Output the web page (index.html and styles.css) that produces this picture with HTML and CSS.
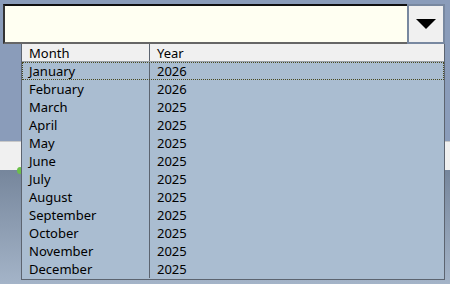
FILE: index.html
```html
<!DOCTYPE html>
<html lang="en">
<head>
    <meta charset="UTF-8">
    <title>Month picker</title>
    <link rel="stylesheet" href="styles.css">
</head>
<body>
    <div class="page">
        <div class="band-top">
            <div class="combo">
                <div class="combo-text"></div>
                <div class="combo-btn">
                    <svg width="20" height="11" viewBox="0 0 20 11"><polygon points="0,0 20,0 10,10" fill="#000"/></svg>
                </div>
            </div>
        </div>
        <div class="strip"><span class="blob"></span></div>
        <div class="band-bottom"></div>

        <div class="dropdown">
            <div class="row head">
                <div class="cell">Month</div>
                <div class="cell">Year</div>
            </div>
            <div class="row focus"><div class="cell">January</div><div class="cell">2026</div></div>
            <div class="row"><div class="cell">February</div><div class="cell">2026</div></div>
            <div class="row"><div class="cell">March</div><div class="cell">2025</div></div>
            <div class="row"><div class="cell">April</div><div class="cell">2025</div></div>
            <div class="row"><div class="cell">May</div><div class="cell">2025</div></div>
            <div class="row"><div class="cell">June</div><div class="cell">2025</div></div>
            <div class="row"><div class="cell">July</div><div class="cell">2025</div></div>
            <div class="row"><div class="cell">August</div><div class="cell">2025</div></div>
            <div class="row"><div class="cell">September</div><div class="cell">2025</div></div>
            <div class="row"><div class="cell">October</div><div class="cell">2025</div></div>
            <div class="row"><div class="cell">November</div><div class="cell">2025</div></div>
            <div class="row"><div class="cell">December</div><div class="cell">2025</div></div>
        </div>
    </div>
</body>
</html>
```

FILE: styles.css
```css
html, body {
    margin: 0;
    padding: 0;
}

body {
    font-family: "Comic Sans MS", "Noto Sans", sans-serif;
    font-size: 13px;
    color: #000;
    width: 450px;
    height: 284px;
    overflow: hidden;
}

.page {
    position: relative;
    height: 284px;
    display: flex;
    flex-direction: column;
}

.band-top {
    height: 141px;
    background: #8a9cba;
    padding: 4px 0 0 3px;
    box-sizing: border-box;
}

.combo {
    display: flex;
    width: 442px;
    height: 40px;
    box-sizing: border-box;
    border-top: 2px solid #111;
    border-left: 2px solid #333;
    border-bottom: 2px solid #666;
    background: #fffff2;
}

.combo-text {
    flex: 1;
}

.combo-btn {
    width: 38px;
    margin-top: -2px;
    height: 40px;
    box-sizing: border-box;
    border: 2px solid #7888a0;
    background: #f0f0f0;
    display: flex;
    align-items: center;
    justify-content: center;
}

.strip {
    height: 29px;
    background: #f0f0f0;
    border-top: 1px solid #c8c8c8;
    box-sizing: border-box;
    position: relative;
}

.blob {
    position: absolute;
    left: 17px;
    top: 25px;
    width: 6px;
    height: 7px;
    border-radius: 50%;
    background: #6cc04a;
}

.band-bottom {
    flex: 1;
    background: linear-gradient(#76869c, #a4b4c8);
}

.dropdown {
    position: absolute;
    left: 21px;
    top: 44px;
    width: 424px;
    height: 236px;
    box-sizing: border-box;
    border: 1px solid #5c6470;
    border-top: none;
    background: #aabdd1;
}

.row {
    display: flex;
    height: 18px;
    line-height: 19px;
    box-sizing: border-box;
}

.row.head {
    background: #f0f0f0;
    border-bottom: 1px solid #9aa0a8;
}

.row.focus {
    outline: 1px dotted #4a4a20;
    outline-offset: -1px;
}

.cell {
    padding-left: 7px;
    white-space: nowrap;
}

.cell:first-child {
    box-sizing: border-box;
    width: 128px;
    border-right: 1px solid #5c6470;
}
```
